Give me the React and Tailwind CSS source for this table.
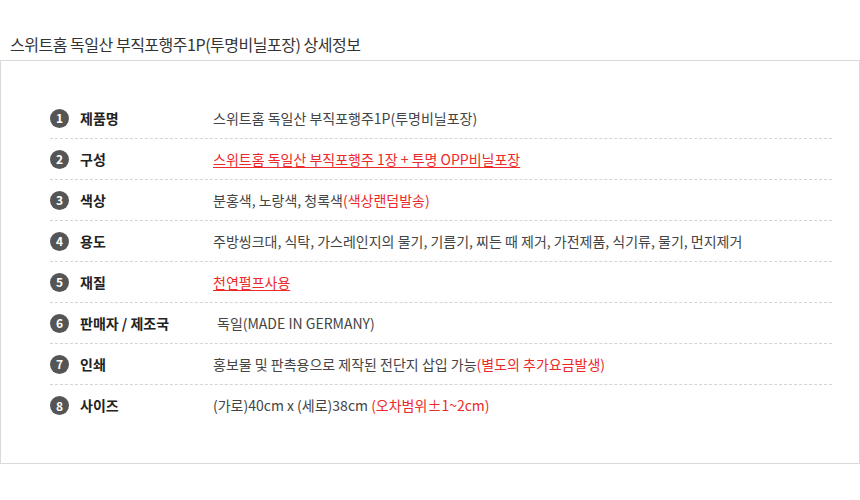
import React from "react";

const rows = [
  { label: "제품명", value: <>스위트홈 독일산 부직포행주1P(투명비닐포장)</> },
  {
    label: "구성",
    value: <span className="text-[#ec2a2a] underline underline-offset-2">스위트홈 독일산 부직포행주 1장 + 투명 OPP비닐포장</span>,
  },
  { label: "색상", value: <>분홍색, 노랑색, 청록색<span className="text-[#ec2a2a]">(색상랜덤발송)</span></> },
  { label: "용도", value: <>주방씽크대, 식탁, 가스레인지의 물기, 기름기, 찌든 때 제거, 가전제품, 식기류, 물기, 먼지제거</> },
  { label: "재질", value: <span className="text-[#ec2a2a] underline underline-offset-2">천연펄프사용</span> },
  { label: "판매자 / 제조국", value: <span className="pl-[4px]">독일(MADE IN GERMANY)</span> },
  { label: "인쇄", value: <>홍보물 및 판촉용으로 제작된 전단지 삽입 가능<span className="text-[#ec2a2a]">(별도의 추가요금발생)</span></> },
  { label: "사이즈", value: <>(가로)40cm x (세로)38cm <span className="text-[#ec2a2a]">(오차범위±1~2cm)</span></> },
];

export default function App() {
  return (
    <div
      className="w-[860px] h-[500px] bg-white"
      style={{ fontFamily: '"Noto Sans CJK KR", "Noto Sans", sans-serif' }}
    >
      {/* Title */}
      <div className="h-[60px] pt-[32px] pl-[10px]">
        <h2 className="text-[16px] leading-[24px] text-[#333] tracking-[-0.03em]">
          스위트홈 독일산 부직포행주1P(투명비닐포장) 상세정보
        </h2>
      </div>

      {/* Detail box */}
      <div className="w-[860px] h-[404px] border border-[#dadada] pl-[49px] pr-[27px] pt-[37px]">
        {rows.map((r, i) => (
          <div
            key={i}
            className={
              "flex items-center h-[41px] " +
              (i < rows.length - 1 ? "border-b border-dashed border-[#d4d4d4]" : "")
            }
          >
            <div className="w-[163px] flex items-center shrink-0">
              <span className="w-[19px] h-[19px] rounded-full bg-[#555] text-white text-[12px] font-bold flex items-center justify-center leading-none">
                {i + 1}
              </span>
              <span className="ml-[11px] text-[14px] font-bold text-[#222]">{r.label}</span>
            </div>
            <div className="text-[14px] text-[#444]">{r.value}</div>
          </div>
        ))}
      </div>
    </div>
  );
}
